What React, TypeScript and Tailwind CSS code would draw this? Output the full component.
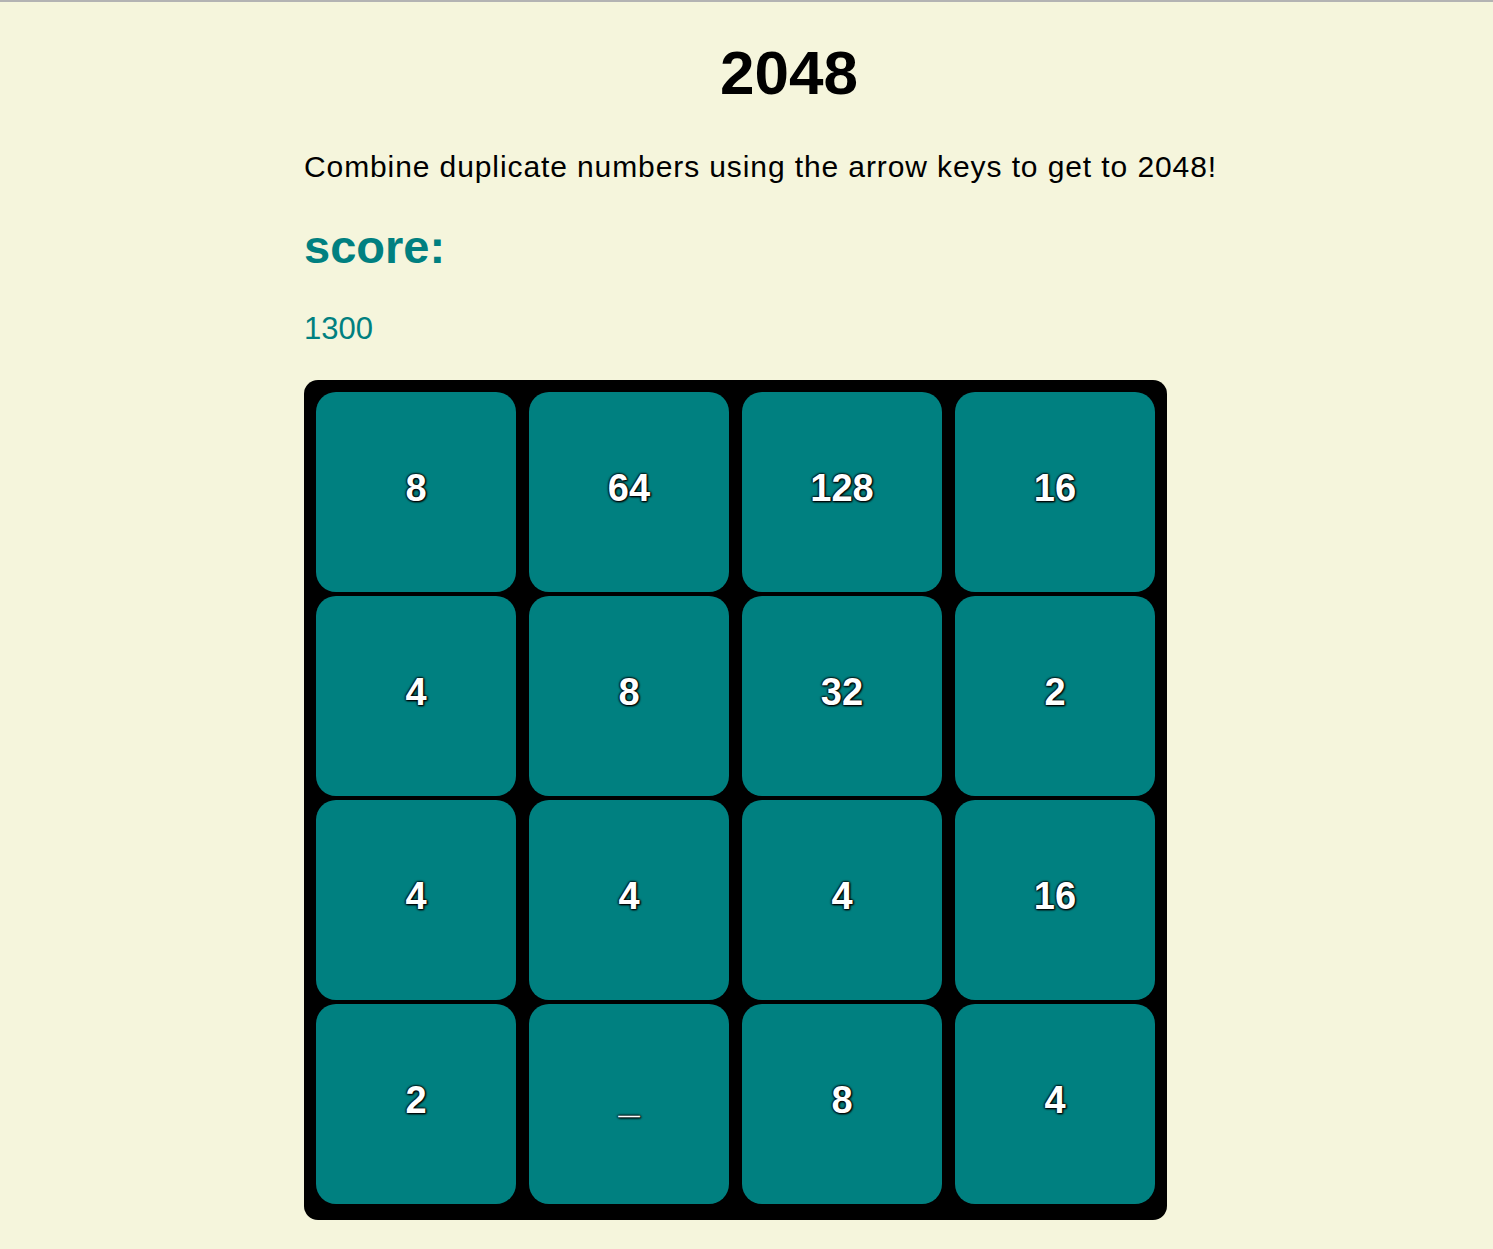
import React from "react";

const tiles = ["8", "64", "128", "16", "4", "8", "32", "2", "4", "4", "4", "16", "2", "_", "8", "4"];

export default function App() {
  return (
    <div className="min-h-[1249px] w-full bg-[#f5f5dc] border-t-2 border-[#b3b3b3] font-['Liberation_Sans',Arial,sans-serif]">
      <div className="ml-[304px] w-[970px] pt-[40px]">
        <h1 className="text-center text-[62px] font-bold leading-none text-black">2048</h1>
        <p className="mt-[48px] text-[30px] leading-none tracking-[0.9px] text-black">
          Combine duplicate numbers using the arrow keys to get to 2048!
        </p>
        <h2 className="mt-[41px] text-[47px] font-bold leading-none text-[#008080]">score:</h2>
        <p className="mt-[43px] text-[31px] leading-none text-[#008080]">1300</p>
        <div className="mt-[36px] w-[863px] rounded-[14px] bg-black pt-[12px] pl-[12px] pr-[12px] pb-[16px]">
          <div className="grid grid-cols-4 gap-x-[13px] gap-y-[4px]">
            {tiles.map((t, i) => (
              <div
                key={i}
                className="flex h-[200px] w-[200px] items-center justify-center rounded-[20px] bg-[#008080] pb-[8px]"
              >
                <span className="text-[38px] font-bold leading-none text-white [text-shadow:0_0_2px_#000,0_0_2px_#000,0_0_3px_#000,1px_1px_2px_#000]">
                  {t}
                </span>
              </div>
            ))}
          </div>
        </div>
      </div>
    </div>
  );
}
